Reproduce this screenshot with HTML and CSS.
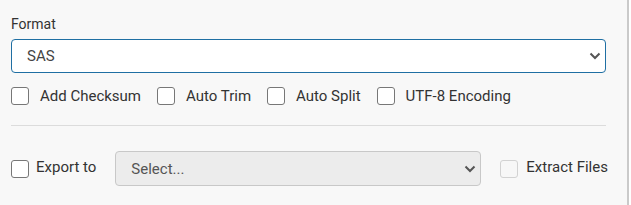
FILE: index.html
```html
<!DOCTYPE html>
<html lang="en">
<head>
  <meta charset="UTF-8">
  <meta name="viewport" content="width=device-width, initial-scale=1.0">
  <title>Export Options</title>
  <link rel="stylesheet" href="styles.css">
</head>
<body>
  <div class="panel">
    <!-- Format -->
    <label class="field-label" for="format">Format</label>
    <div class="select-wrap format-select">
      <select id="format" class="select">
        <option>SAS</option>
        <option>CSV</option>
        <option>JSON</option>
      </select>
      <svg class="chevron" width="12" height="8" viewBox="0 0 12 8"><path d="M1.5 1.5 L6 6 L10.5 1.5" fill="none" stroke="#555" stroke-width="2"/></svg>
    </div>

    <!-- Options -->
    <div class="options">
      <label class="check"><input type="checkbox"><span>Add Checksum</span></label>
      <label class="check"><input type="checkbox"><span>Auto Trim</span></label>
      <label class="check"><input type="checkbox"><span>Auto Split</span></label>
      <label class="check"><input type="checkbox"><span>UTF-8 Encoding</span></label>
    </div>

    <hr class="divider">

    <!-- Export -->
    <div class="export-row">
      <label class="check export-check"><input type="checkbox"><span>Export to</span></label>
      <div class="select-wrap export-select">
        <select class="select" disabled>
          <option>Select...</option>
        </select>
        <svg class="chevron" width="12" height="8" viewBox="0 0 12 8"><path d="M1.5 1.5 L6 6 L10.5 1.5" fill="none" stroke="#555" stroke-width="2"/></svg>
      </div>
      <label class="check extract-check"><input type="checkbox" disabled><span>Extract Files</span></label>
    </div>
  </div>
</body>
</html>
```

FILE: styles.css
```css
* {
  margin: 0;
  padding: 0;
  box-sizing: border-box;
}

body {
  font-family: Roboto, "Liberation Sans", sans-serif;
  background-color: #fff;
  color: #333;
}

.panel {
  width: 629px;
  height: 205px;
  background-color: #f8f8f8;
  border-right: 2px solid #cacaca;
  padding: 14px 21px 0 11px;
}

.field-label {
  display: block;
  font-size: 14px;
  line-height: 20px;
  color: #333;
}

.select-wrap {
  position: relative;
}

.select {
  appearance: none;
  -webkit-appearance: none;
  width: 100%;
  font-family: inherit;
  font-size: 15px;
  color: #444;
  border-radius: 4px;
  outline: none;
}

.format-select {
  margin-top: 5px;
}

.format-select .select {
  height: 34px;
  padding: 0 30px 0 15px;
  background-color: #fff;
  border: 1px solid #1f6fa3;
}

.chevron {
  position: absolute;
  right: 5px;
  top: 50%;
  transform: translateY(-50%);
  pointer-events: none;
}

.options {
  display: flex;
  gap: 16px;
  margin-top: 14px;
}

.check {
  display: flex;
  align-items: center;
  gap: 11px;
  font-size: 15px;
  color: #333;
  white-space: nowrap;
}

.check input {
  appearance: none;
  -webkit-appearance: none;
  flex: 0 0 18px;
  width: 18px;
  height: 18px;
  border: 1px solid #777;
  border-radius: 3px;
  background-color: #fff;
}

.check input:disabled {
  border-color: #d2d2d2;
  background-color: #f7f7f7;
}

.divider {
  border: none;
  border-top: 1px solid #dcdcdc;
  margin-top: 20px;
}

.export-row {
  display: flex;
  align-items: center;
  margin-top: 25px;
}

.export-check {
  gap: 7px;
}

.export-check span,
.extract-check span {
  position: relative;
  top: -2px;
}

.export-select {
  flex: 0 0 366px;
  margin-left: 19px;
}

.export-select .select {
  height: 35px;
  padding: 0 30px 0 15px;
  background-color: #ececec;
  border: 1px solid #c8c8c8;
  color: #555;
  opacity: 1;
}

.extract-check {
  margin-left: 19px;
  gap: 8px;
}
```
